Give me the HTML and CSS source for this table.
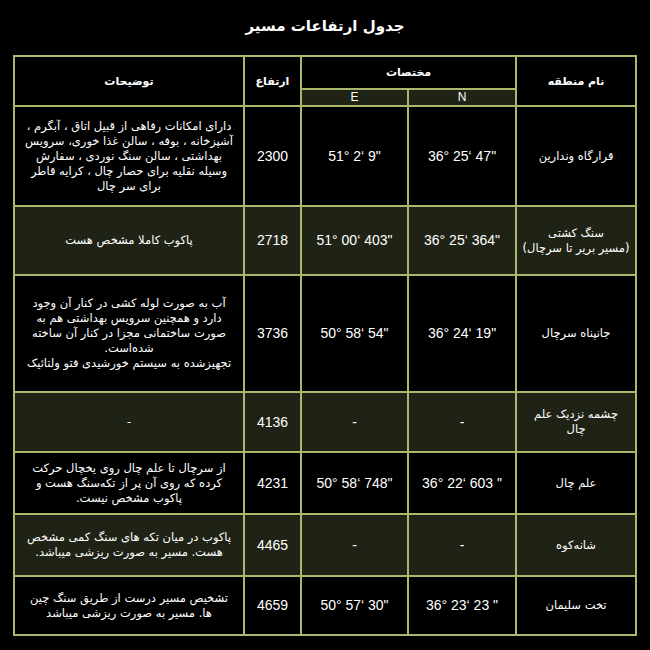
FILE: index.html
```html
<!DOCTYPE html>
<html lang="fa" dir="rtl">
<head>
<meta charset="utf-8">
<title>جدول ارتفاعات مسیر</title>
<link rel="stylesheet" href="styles.css">
</head>
<body>
<div class="page">
  <h1 class="title">جدول ارتفاعات مسیر</h1>
  <table class="grid">
    <colgroup>
      <col class="c-name"><col class="c-n"><col class="c-e"><col class="c-alt"><col class="c-desc">
    </colgroup>
    <thead>
      <tr class="h1">
        <th rowspan="2">نام منطقه</th>
        <th colspan="2" class="coord">مختصات</th>
        <th rowspan="2">ارتفاع</th>
        <th rowspan="2">توضیحات</th>
      </tr>
      <tr class="h2">
        <th class="sub">N</th>
        <th class="sub">E</th>
      </tr>
    </thead>
    <tbody>
      <tr class="r1 dark">
        <td class="name">قرارگاه وندارین</td>
        <td class="num">36° 25‘ 47"</td>
        <td class="num">51° 2‘ 9"</td>
        <td class="num">2300</td>
        <td class="desc">دارای امکانات رفاهی از قبیل اتاق ، آبگرم ، آشپزخانه ، بوفه ، سالن غذا خوری، سرویس بهداشتی ، سالن سنگ نوردی ، سفارش وسیله نقلیه برای حصار چال ، کرایه قاطر برای سر چال</td>
      </tr>
      <tr class="r2 olive">
        <td class="name">سنگ کشتی<br><span class="nw">(مسیر بریر تا سرچال)</span></td>
        <td class="num">36° 25‘ 364"</td>
        <td class="num">51° 00‘ 403"</td>
        <td class="num">2718</td>
        <td class="desc">پاکوب کاملا مشخص هست</td>
      </tr>
      <tr class="r3 dark">
        <td class="name">جانپناه سرچال</td>
        <td class="num">36° 24‘ 19"</td>
        <td class="num">50° 58‘ 54"</td>
        <td class="num">3736</td>
        <td class="desc">آب به صورت لوله کشی در کنار آن وجود دارد و همچنین سرویس بهداشتی هم به صورت ساختمانی مجزا در کنار آن ساخته شده‌است.<br>تجهیزشده به سیستم خورشیدی فتو ولتائیک</td>
      </tr>
      <tr class="r4 olive">
        <td class="name">چشمه نزدیک علم<br>چال</td>
        <td class="num">-</td>
        <td class="num">-</td>
        <td class="num">4136</td>
        <td class="desc">-</td>
      </tr>
      <tr class="r5 dark">
        <td class="name">علم چال</td>
        <td class="num">36° 22‘ 603 "</td>
        <td class="num">50° 58‘ 748"</td>
        <td class="num">4231</td>
        <td class="desc">از سرچال تا علم چال روی یخچال حرکت کرده که روی آن پر از تکه‌سنگ هست و پاکوب مشخص نیست.</td>
      </tr>
      <tr class="r6 olive">
        <td class="name">شانه‌کوه</td>
        <td class="num">-</td>
        <td class="num">-</td>
        <td class="num">4465</td>
        <td class="desc">پاکوب در میان تکه های سنگ کمی مشخص هست. مسیر به صورت ریزشی میباشد.</td>
      </tr>
      <tr class="r7 dark">
        <td class="name">تخت سلیمان</td>
        <td class="num">36° 23‘ 23 "</td>
        <td class="num">50° 57‘ 30"</td>
        <td class="num">4659</td>
        <td class="desc">تشخیص مسیر درست از طریق سنگ چین ها. مسیر به صورت ریزشی میباشد</td>
      </tr>
    </tbody>
  </table>
</div>
</body>
</html>
```
FILE: styles.css
```css
html, body {
  margin: 0;
  padding: 0;
  background: #000;
}
body {
  width: 650px;
  height: 650px;
  overflow: hidden;
  color: #fff;
  font-family: "DejaVu Sans", "Noto Sans", sans-serif;
}
.page {
  display: flex;
  flex-direction: column;
  align-items: center;
  padding-top: 17px;
}
.title {
  margin: 0 0 20px 0;
  font-size: 15px;
  font-weight: bold;
  line-height: 18px;
  color: #fff;
}
.grid {
  border-collapse: collapse;
  width: 622px;
  table-layout: fixed;
  font-size: 11.5px;
  line-height: 15px;
}
.c-name { width: 120px; }
.c-n { width: 108px; }
.c-e { width: 107px; }
.c-alt { width: 57px; }
.c-desc { width: 230px; }
.grid th, .grid td {
  border: 2px solid #a9b86b;
  text-align: center;
  vertical-align: middle;
  padding: 0 6px;
  font-weight: normal;
}
.grid th {
  font-weight: bold;
  font-size: 11px;
}
.h1 th { height: 31px; }
.h2 th { height: 15px; }
.sub {
  background: #1f2316;
  font-family: "Liberation Sans", sans-serif;
  font-weight: normal !important;
  font-size: 12px !important;
}
.grid td.num {
  direction: ltr;
  font-family: "Liberation Sans", sans-serif;
  font-size: 14px;
  padding: 0 4px;
}
.grid td.name {
  padding: 0 3px;
}
.nw { white-space: nowrap; }
.grid td.desc {
  padding: 0 9px;
}
.dark { background: #000; }
.olive { background: #1f2316; }
.r1 td { height: 98px; }
.r2 td { height: 67px; }
.r3 td { height: 115px; }
.r4 td { height: 58px; }
.r5 td { height: 60px; }
.r6 td { height: 60px; }
.r7 td { height: 57px; }
```
